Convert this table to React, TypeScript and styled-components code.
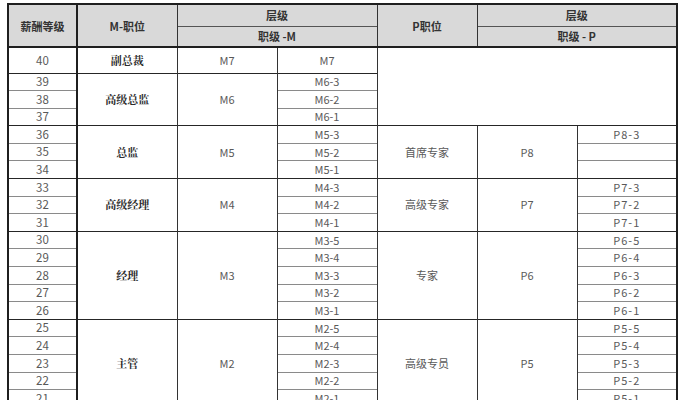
import React from "react";
import styled, { createGlobalStyle } from "styled-components";

const GlobalStyle = createGlobalStyle`
  html, body {
    margin: 0;
    padding: 0;
    background: #ffffff;
    overflow: hidden;
  }
  body {
    font-family: "Noto Sans CJK SC", "Noto Sans", sans-serif;
  }
`;

const Page = styled.div`
  padding: 3px 0 0 7px;
  width: 681px;
  height: 400px;
  box-sizing: border-box;
  overflow: hidden;
`;

const Grid = styled.table`
  border-collapse: collapse;
  table-layout: fixed;
  width: 669px;
  border-top: 2px solid #1f1f1f;
  border-left: 2px solid #1f1f1f;
  border-right: 2px solid #1f1f1f;
  font-size: 11px;
  color: #595959;
`;

const HeadRow = styled.tr<{ $h: number }>`
  height: ${(p) => p.$h}px;
`;

const HeadCell = styled.th<{ $thick?: boolean; $last?: boolean }>`
  background: #d9d9d9;
  color: #333333;
  font-weight: 700;
  font-size: 11px;
  padding: 0;
  text-align: center;
  vertical-align: middle;
  border-left: ${(p) => (p.$thick ? "2px solid #1f1f1f" : "1px solid #333333")};
  border-top: 1px solid #555555;
  border-bottom: ${(p) => (p.$last ? "2px solid #1f1f1f" : "none")};
`;

const BodyRow = styled.tr<{ $h: number }>`
  height: ${(p) => p.$h}px;
`;

const Cell = styled.td<{ $top?: "group" | "inner"; $thick?: boolean; $tone?: "name" | "plain" | "code" | "num" }>`
  padding: 0;
  text-align: center;
  vertical-align: middle;
  white-space: nowrap;
  line-height: 1;
  border-left: ${(p) => (p.$thick ? "2px solid #1f1f1f" : "1px solid #333333")};
  border-top: ${(p) =>
    p.$top === "inner" ? "1px solid #8a8a8a" : "1px solid #262626"};
  font-size: ${(p) => (p.$tone === "num" ? "11.5px" : "11px")};
  letter-spacing: ${(p) => (p.$tone === "code" ? "1px" : "0")};
  color: ${(p) => (p.$tone === "name" ? "#2b2b2b" : "#595959")};
  font-weight: ${(p) => (p.$tone === "name" ? 700 : 400)};
  font-family: ${(p) =>
    p.$tone === "name"
      ? '"Noto Serif CJK SC", "Noto Sans CJK SC", serif'
      : '"Noto Sans CJK SC", "Noto Sans", sans-serif'};
`;

const ColCol = styled.col<{ $w: number }>`
  width: ${(p) => p.$w}px;
`;

type PSide = { name: string; level: string; subs: string[] };
type Group = {
  grades: number[];
  mName: string;
  mLevel: string;
  mSubs: string[];
  p?: PSide;
  blankP?: number;
};

const groups: Group[] = [
  { grades: [40], mName: "副总裁", mLevel: "M7", mSubs: ["M7"], blankP: 4 },
  { grades: [39, 38, 37], mName: "高级总监", mLevel: "M6", mSubs: ["M6-3", "M6-2", "M6-1"] },
  {
    grades: [36, 35, 34],
    mName: "总监",
    mLevel: "M5",
    mSubs: ["M5-3", "M5-2", "M5-1"],
    p: { name: "首席专家", level: "P8", subs: ["P8-3", "", ""] },
  },
  {
    grades: [33, 32, 31],
    mName: "高级经理",
    mLevel: "M4",
    mSubs: ["M4-3", "M4-2", "M4-1"],
    p: { name: "高级专家", level: "P7", subs: ["P7-3", "P7-2", "P7-1"] },
  },
  {
    grades: [30, 29, 28, 27, 26],
    mName: "经理",
    mLevel: "M3",
    mSubs: ["M3-5", "M3-4", "M3-3", "M3-2", "M3-1"],
    p: { name: "专家", level: "P6", subs: ["P6-5", "P6-4", "P6-3", "P6-2", "P6-1"] },
  },
  {
    grades: [25, 24, 23, 22, 21],
    mName: "主管",
    mLevel: "M2",
    mSubs: ["M2-5", "M2-4", "M2-3", "M2-2", "M2-1"],
    p: { name: "高级专员", level: "P5", subs: ["P5-5", "P5-4", "P5-3", "P5-2", "P5-1"] },
  },
];

const App = () => {
  return (
    <Page>
      <GlobalStyle />
      <Grid>
        <colgroup>
          <ColCol $w={69} />
          <ColCol $w={100} />
          <ColCol $w={100} />
          <ColCol $w={100} />
          <ColCol $w={100} />
          <ColCol $w={100} />
          <ColCol $w={100} />
        </colgroup>
        <thead>
          <HeadRow $h={22}>
            <HeadCell rowSpan={2} $last>薪酬等级</HeadCell>
            <HeadCell rowSpan={2} $thick $last>M-职位</HeadCell>
            <HeadCell colSpan={2}>层级</HeadCell>
            <HeadCell rowSpan={2} $last>P职位</HeadCell>
            <HeadCell colSpan={2}>层级</HeadCell>
          </HeadRow>
          <HeadRow $h={21}>
            <HeadCell colSpan={2} $last>职级 -M</HeadCell>
            <HeadCell colSpan={2} $last>职级 - P</HeadCell>
          </HeadRow>
        </thead>
        <tbody>
          {groups.map((g) =>
            g.grades.map((grade, i) => {
              const top = i === 0 ? "group" : "inner";
              return (
                <BodyRow key={grade} $h={grade === 40 ? 26 : 17.6}>
                  <Cell $top={top} $tone="num">{grade}</Cell>
                  {i === 0 && (
                    <Cell rowSpan={g.grades.length} $thick $top="group" $tone="name">
                      {g.mName}
                    </Cell>
                  )}
                  {i === 0 && (
                    <Cell rowSpan={g.grades.length} $top="group" $tone="plain">
                      {g.mLevel}
                    </Cell>
                  )}
                  <Cell $top={top} $tone="plain">{g.mSubs[i]}</Cell>
                  {g.blankP && i === 0 && (
                    <Cell rowSpan={g.blankP} colSpan={3} $top="group" />
                  )}
                  {g.p && i === 0 && (
                    <Cell rowSpan={g.grades.length} $top="group" $tone="plain">
                      {g.p.name}
                    </Cell>
                  )}
                  {g.p && i === 0 && (
                    <Cell rowSpan={g.grades.length} $top="group" $tone="plain">
                      {g.p.level}
                    </Cell>
                  )}
                  {g.p && (
                    <Cell $top={top} $tone="code">{g.p.subs[i]}</Cell>
                  )}
                </BodyRow>
              );
            })
          )}
        </tbody>
      </Grid>
    </Page>
  );
};

export default App;
